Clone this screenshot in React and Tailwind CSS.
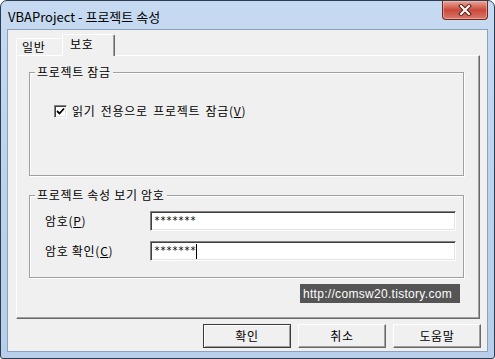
const sunken = 'border border-t-[#808080] border-l-[#808080] border-b-white border-r-white shadow-[inset_1px_1px_0_#404040,inset_-1px_-1px_0_#e3e3e3]'

const Button = ({ label, primary }) => (
    <button
        type="button"
        className={`w-[88px] h-[24px] bg-[#f0f0f0] text-[12px] leading-[14px] tracking-[0.7px] text-black flex items-center justify-center ${primary
            ? 'border border-[#3a3a3a] shadow-[inset_1px_1px_0_#fff,inset_-1px_-1px_0_#a0a0a0]'
            : 'border border-t-white border-l-white border-b-[#696969] border-r-[#696969] shadow-[inset_-1px_-1px_0_#a0a0a0]'
            }`}
    >
        {label}
    </button>
)

const GroupBox = ({ title, className, children }) => (
    <div className={`relative border border-[#a0a0a0] shadow-[inset_1px_1px_0_#fff,1px_1px_0_#fff] ${className}`}>
        <span className="absolute -top-[9px] left-[5px] bg-[#f0f0f0] px-[2px] text-[12px] leading-[16px] tracking-[0.7px] text-black">
            {title}
        </span>
        {children}
    </div>
)

const PasswordRow = ({ label, hotkey, caret }) => (
    <div className="flex items-center h-[20px]">
        <span className="w-[105px] text-[12px] leading-[14px] tracking-[0.7px] text-black">
            {label}(<span className="underline">{hotkey}</span>)
        </span>
        <div className={`w-[306px] h-[20px] bg-white flex items-center pl-[3px] ${sunken}`}>
            <span className="font-['DejaVu_Sans_Mono',monospace] text-[10px] leading-[12px] text-black">*******</span>
            {caret && <span className="w-px h-[15px] bg-black" />}
        </div>
    </div>
)

export default function App() {
    return (
        <div className="w-[495px] h-[359px] flex flex-col border border-[#2c3d52] rounded-t-[7px] rounded-b-[3px] bg-gradient-to-b from-[#c6dbf1] via-[#bcd3ec] to-[#b7cfea] font-['Noto_Sans_CJK_KR','Noto_Sans',sans-serif] relative overflow-hidden">
            {/* title bar */}
            <div className="h-[28px] flex items-center pl-[7px] pt-[2px] shrink-0">
                <span className="text-[13px] leading-[15px] text-black">VBAProject - 프로젝트 속성</span>
            </div>
            <div className="absolute top-0 right-[6px] w-[46px] h-[19px] rounded-b-[4px] border border-t-0 border-[#6e2820] bg-gradient-to-b from-[#e8a597] via-[#c9483c] to-[#d9786a] flex items-center justify-center shadow-[inset_0_0_0_1px_rgba(255,200,190,0.5)]">
                <svg width="14" height="12" viewBox="0 0 14 12">
                    <path d="M3 2 L11 10 M11 2 L3 10" stroke="#5a1e18" strokeWidth="4" strokeLinecap="square" />
                    <path d="M3 2 L11 10 M11 2 L3 10" stroke="#fff" strokeWidth="2" strokeLinecap="square" />
                </svg>
            </div>

            {/* client area */}
            <div className="mx-[6px] mb-[6px] flex-1 flex flex-col bg-[#f0f0f0] border border-[#8ca2bb]">
                {/* tabs */}
                <div className="ml-[8px] mt-[4px] h-[21px] flex items-end relative z-10">
                    <div className="h-[17px] w-[47px] border border-b-0 border-t-white border-l-white border-r-[#696969] rounded-t-[2px] flex items-center pl-[5px] text-[12px] leading-[14px] tracking-[0.7px] text-black">
                        일반
                    </div>
                    <div className="h-[22px] -mb-px w-[53px] -ml-[1px] bg-[#f0f0f0] border border-b-0 border-t-white border-l-white border-r-[#696969] shadow-[inset_-1px_0_0_#a0a0a0] rounded-t-[2px] flex items-start pt-[2px] pl-[7px] text-[12px] leading-[14px] tracking-[0.7px] text-black">
                        보호
                    </div>
                </div>

                {/* tab panel */}
                <div className="ml-[8px] mr-[7px] h-[264px] flex flex-col border border-t-white border-l-white border-b-[#696969] border-r-[#696969] shadow-[inset_-1px_-1px_0_#a0a0a0]">
                    <GroupBox title="프로젝트 잠금" className="ml-[12px] mt-[16px] w-[435px] h-[104px] shrink-0">
                        <div className="flex items-center ml-[24px] mt-[31px]">
                            <div className={`w-[13px] h-[13px] bg-white flex items-center justify-center ${sunken}`}>
                                <svg width="9" height="9" viewBox="0 0 9 9">
                                    <path d="M1 4 L3.5 6.5 L8 1.5" fill="none" stroke="#000" strokeWidth="1.8" />
                                </svg>
                            </div>
                            <span className="ml-[5px] text-[12px] leading-[14px] tracking-[0.7px] [word-spacing:2px] text-black">
                                읽기 전용으로 프로젝트 잠금(<span className="underline">V</span>)
                            </span>
                        </div>
                    </GroupBox>

                    <GroupBox title="프로젝트 속성 보기 암호" className="ml-[12px] mt-[19px] w-[435px] h-[83px] shrink-0">
                        <div className="flex flex-col gap-[10px] pl-[15px] pt-[15px]">
                            <PasswordRow label="암호" hotkey="P" />
                            <PasswordRow label="암호 확인" hotkey="C" caret />
                        </div>
                    </GroupBox>

                    <div className="flex justify-end mr-[19px] mt-[6px]">
                        <div className="h-[19px] w-[160px] bg-[#555555] flex items-center pl-[3px] font-['Liberation_Sans',sans-serif] text-[12px] leading-[14px] tracking-[0.3px] text-white">
                            http://comsw20.tistory.com
                        </div>
                    </div>
                </div>

                {/* buttons */}
                <div className="flex justify-end gap-[7px] mr-[6px] mt-[5px]">
                    <Button label="확인" primary />
                    <Button label="취소" />
                    <Button label="도움말" />
                </div>
            </div>
        </div>
    )
}
